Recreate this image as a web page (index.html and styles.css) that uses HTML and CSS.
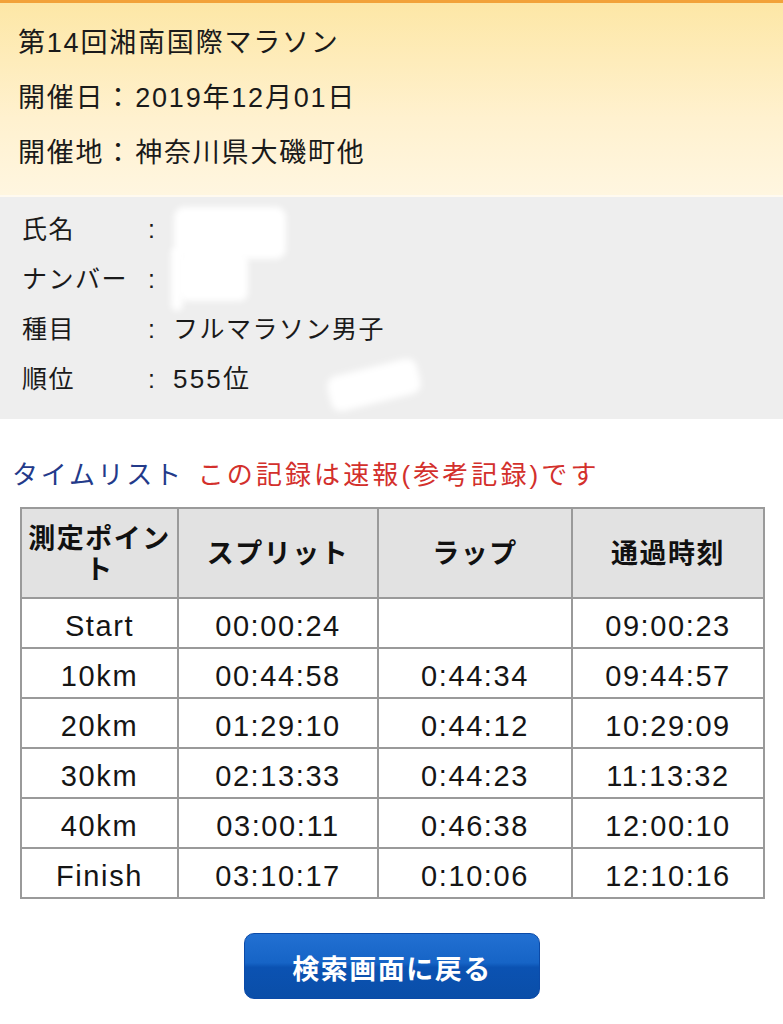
FILE: index.html
```html
<!DOCTYPE html>
<html lang="ja">
<head>
<meta charset="utf-8">
<title>第14回湘南国際マラソン</title>
<link rel="stylesheet" href="styles.css">
</head>
<body>
<header class="event">
  <div class="event-line">第14回湘南国際マラソン</div>
  <div class="event-line">開催日：<span class="event-value">2019年12月01日</span></div>
  <div class="event-line">開催地：<span class="event-value">神奈川県大磯町他</span></div>
</header>
<section class="runner">
  <div class="runner-row"><span class="runner-label">氏名</span><span class="runner-colon">:</span><span class="runner-value"></span></div>
  <div class="runner-row"><span class="runner-label">ナンバー</span><span class="runner-colon">:</span><span class="runner-value"></span></div>
  <div class="runner-row"><span class="runner-label">種目</span><span class="runner-colon">:</span><span class="runner-value">フルマラソン男子</span></div>
  <div class="runner-row"><span class="runner-label">順位</span><span class="runner-colon">:</span><span class="runner-value runner-num">555位</span></div>
  <div class="mask mask-a"></div>
  <div class="mask mask-b"></div>
  <div class="mask mask-c"></div>
  <div class="mask mask-d"></div>
</section>
<h2 class="list-title"><span class="list-name">タイムリスト</span><span class="list-note">この記録は速報(参考記録)です</span></h2>
<table class="times">
  <colgroup>
    <col class="c1"><col class="c2"><col class="c3"><col class="c4">
  </colgroup>
  <thead>
    <tr><th>測定ポイント</th><th>スプリット</th><th>ラップ</th><th>通過時刻</th></tr>
  </thead>
  <tbody>
    <tr><td>Start</td><td>00:00:24</td><td></td><td>09:00:23</td></tr>
    <tr><td>10km</td><td>00:44:58</td><td>0:44:34</td><td>09:44:57</td></tr>
    <tr><td>20km</td><td>01:29:10</td><td>0:44:12</td><td>10:29:09</td></tr>
    <tr><td>30km</td><td>02:13:33</td><td>0:44:23</td><td>11:13:32</td></tr>
    <tr><td>40km</td><td>03:00:11</td><td>0:46:38</td><td>12:00:10</td></tr>
    <tr><td>Finish</td><td>03:10:17</td><td>0:10:06</td><td>12:10:16</td></tr>
  </tbody>
</table>
<div class="actions">
  <a class="back-btn" href="#">検索画面に戻る</a>
</div>
</body>
</html>
```

FILE: styles.css
```css
* { box-sizing: border-box; }
html, body {
  margin: 0;
  padding: 0;
  background: #ffffff;
}
body {
  width: 783px;
  font-family: "Liberation Sans", "Noto Sans CJK JP", sans-serif;
  color: #1a1a1a;
}

.event {
  border-top: 3px solid #f2a23a;
  background: linear-gradient(to bottom, #fde7a6 0%, #fff1cf 60%, #fff6e0 100%);
  padding: 13px 0 14px 18px;
  border-bottom: 2px solid #fffaf0;
}
.event-line {
  font-size: 27px;
  line-height: 55px;
  letter-spacing: 1.8px;
  white-space: nowrap;
}
.event-value { margin-left: 2px; }

.runner {
  position: relative;
  background: #eeeeee;
  padding: 7px 0 15px 22px;
}
.runner-row {
  display: grid;
  grid-template-columns: 126px 25px 1fr;
  font-size: 25px;
  line-height: 50px;
  letter-spacing: 1.5px;
}
.runner-colon { letter-spacing: 0; }
.runner-num { font-size: 26px; letter-spacing: 2.2px; }
.mask {
  position: absolute;
  background: #ffffff;
  filter: blur(3px);
}
.mask-a { left: 174px; top: 10px; width: 112px; height: 52px; border-radius: 10px; }
.mask-b { left: 178px; top: 56px; width: 70px; height: 48px; border-radius: 8px; }
.mask-c { left: 171px; top: 50px; width: 12px; height: 64px; border-radius: 6px; }
.mask-d { left: 328px; top: 170px; width: 92px; height: 36px; border-radius: 10px; transform: rotate(-14deg); }

.list-title {
  margin: 36px 0 12px 12px;
  font-weight: normal;
  font-size: 26px;
  line-height: 40px;
  white-space: nowrap;
}
.list-name { color: #233a8a; margin-right: 14px; letter-spacing: 2.7px; }
.list-note { color: #d3302c; letter-spacing: 3.1px; }

.times {
  margin-left: 20px;
  width: 743px;
  border-collapse: collapse;
  table-layout: fixed;
  border: 2px solid #9a9a9a;
}
.c1 { width: 157px; }
.c2 { width: 200px; }
.c3 { width: 194px; }
.c4 { width: 192px; }
.times th, .times td {
  border: 2px solid #9a9a9a;
  text-align: center;
  padding: 0 2px;
}
.times th {
  background: #e2e2e2;
  height: 90px;
  font-size: 27px;
  font-weight: bold;
  line-height: 31px;
  letter-spacing: 1.5px;
  color: #111;
  padding-top: 3px;
}
.times td {
  height: 50px;
  font-size: 29px;
  line-height: 30px;
  letter-spacing: 1.6px;
  color: #151515;
  padding-top: 5px;
}

.actions {
  display: flex;
  justify-content: center;
  padding: 34px 0 0 0;
}
.back-btn {
  display: flex;
  align-items: center;
  justify-content: center;
  width: 296px;
  height: 66px;
  margin-left: 1px;
  border-radius: 10px;
  border: 1px solid #0b4aa8;
  background: linear-gradient(to bottom, #2270d2 0%, #1664c6 45%, #0b52b2 52%, #0a4ea8 100%);
  color: #ffffff;
  font-size: 27px;
  font-weight: bold;
  letter-spacing: 1.5px;
  text-decoration: none;
  padding-top: 3px;
}
```
